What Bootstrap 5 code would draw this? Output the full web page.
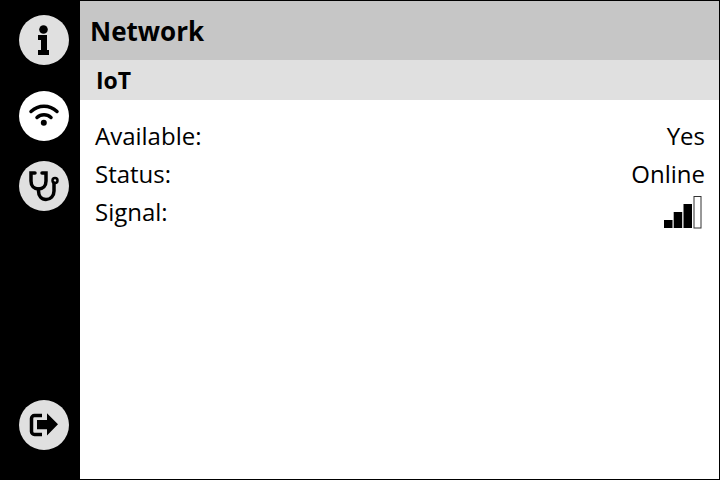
<!DOCTYPE html>
<html lang="en">
<head>
  <meta charset="UTF-8">
  <title>Network</title>
  <meta name="viewport" content="width=device-width, initial-scale=1">
  <link href="https://cdn.jsdelivr.net/npm/bootstrap@5.3.0/dist/css/bootstrap.min.css" rel="stylesheet">
  <style>
    html, body { height: 100%; }
    body { background: #000; font-family: "Open Sans", sans-serif; color: #000; overflow: hidden; }
    .screen { width: 720px; height: 480px; padding: 1px 1px 1px 0; }
    .side-rail { width: 80px; padding: 14px 0 29px 19px; }
    .rail-btn { width: 50px; height: 50px; background: #e0e0e0; border: 0; padding: 0; }
    .rail-btn.active-btn { background: #fff; }
    .rail-btn + .rail-btn { margin-top: 20px; }
    .rail-btn.first-gap { margin-top: 26px; }
    .main-pane { background: #fff; }
    .pane-title { height: 59px; background: #c6c6c6; padding-left: 10px; font-size: 26px; font-weight: 700; line-height: 61px; }
    .pane-sub { height: 40px; background: #e0e0e0; padding-left: 16px; font-size: 23px; font-weight: 700; line-height: 41px; }
    .info-rows { padding: 17px 14px 0 15px; font-size: 24px; line-height: 38.500px; }
    .info-rows > div { height: 38.500px; margin-bottom: -0.300px; }
    .signal-bars { width: 38px; height: 33px; margin-right: 3px; margin-top: -1px; }
  </style>
</head>
<body>
  <div class="screen d-flex">
    <div class="side-rail d-flex flex-column flex-shrink-0">
      <!-- info -->
      <button class="rail-btn rounded-circle d-flex align-items-center justify-content-center">
        <svg width="50" height="50" viewBox="0 0 50 50">
          <circle cx="24.500" cy="14.500" r="4.300" fill="#000"/>
          <path d="M19 20h9v15h2v5H19v-5h3v-10h-3z" fill="#000"/>
        </svg>
      </button>
      <!-- wifi -->
      <button class="rail-btn first-gap active-btn rounded-circle d-flex align-items-center justify-content-center">
        <svg width="50" height="50" viewBox="0 0 50 50" fill="none" stroke="#000" stroke-width="3.500" stroke-linecap="round">
          <path d="M12 20.500c7.500-7 18.500-7 26 0"/>
          <path d="M18 26.500c4-3.800 10-3.800 14 0"/>
          <circle cx="24.800" cy="31.700" r="3" fill="#000" stroke="none"/>
        </svg>
      </button>
      <!-- stethoscope -->
      <button class="rail-btn rounded-circle d-flex align-items-center justify-content-center">
        <svg width="50" height="50" viewBox="0 0 50 50" fill="none" stroke="#000" stroke-width="3.500" stroke-linecap="round">
          <path d="M16 12h-4v8c0 5 3 8 7.500 8s7.500-3 7.500-8v-8h-4"/>
          <path d="M19.500 28v2c0 5 3 8.500 7.500 8.500s8-3.500 8-8.500v-8"/>
          <circle cx="36" cy="19.500" r="2.500" stroke-width="2.500"/>
        </svg>
      </button>
      <!-- exit -->
      <button class="rail-btn rounded-circle d-flex align-items-center justify-content-center mt-auto">
        <svg width="50" height="50" viewBox="0 0 50 50">
          <path d="M23 15.500h-7.500a3 3 0 0 0-3 3v13a3 3 0 0 0 3 3H23" fill="none" stroke="#000" stroke-width="3.500"/>
          <path d="M18 20h10v-6.700l11 11-11 11.300v-6.300H18z" fill="#000"/>
        </svg>
      </button>
    </div>
    <div class="main-pane flex-grow-1">
      <div class="pane-title">Network</div>
      <div class="pane-sub">IoT</div>
      <div class="info-rows">
        <div class="d-flex justify-content-between"><span>Available:</span><span>Yes</span></div>
        <div class="d-flex justify-content-between"><span>Status:</span><span>Online</span></div>
        <div class="d-flex justify-content-between align-items-center">
          <span>Signal:</span>
          <svg class="signal-bars" viewBox="0 0 38 33">
            <rect x="0" y="24" width="8.500" height="8" fill="#000"/>
            <rect x="9.700" y="16" width="8.500" height="16" fill="#000"/>
            <rect x="19.500" y="8" width="8.500" height="24" fill="#000"/>
            <rect x="30" y="0.500" width="7" height="31.500" fill="#fff" stroke="#333"/>
          </svg>
        </div>
      </div>
    </div>
  </div>
  <script src="https://cdn.jsdelivr.net/npm/bootstrap@5.3.0/dist/js/bootstrap.bundle.min.js"></script>
</body>
</html>
